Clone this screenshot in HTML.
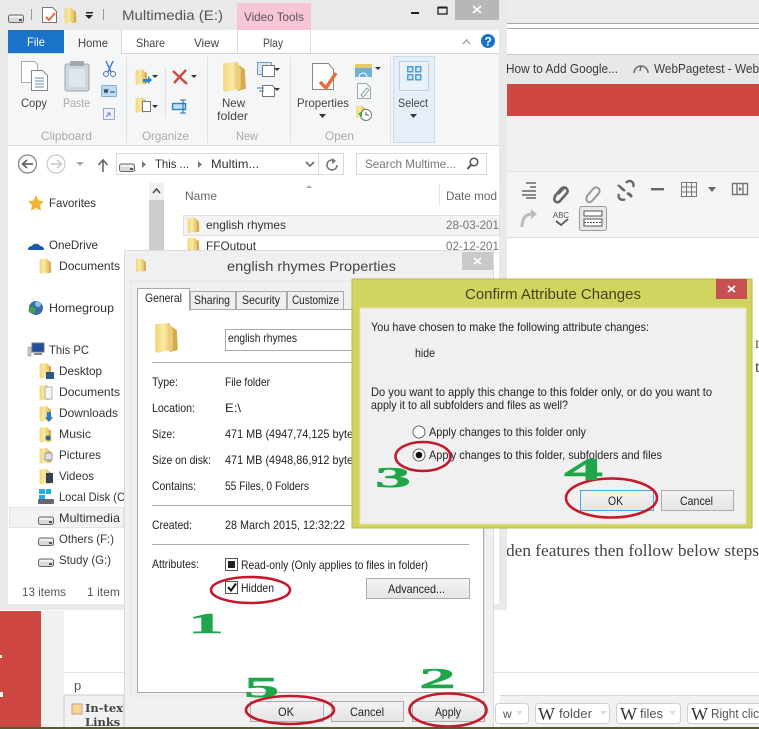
<!DOCTYPE html>
<html><head><meta charset="utf-8"><style>
html,body{margin:0;padding:0;background:#fff;width:759px;height:729px;overflow:hidden}
svg{display:block}
text{font-family:"Liberation Sans",sans-serif;font-size:12px;fill:#3a3a3a;white-space:pre}
.g{fill:#aaa}.d{fill:#222;font-size:12px}.s{font-family:"Liberation Serif",serif}
.n{font-family:"Liberation Serif",serif;font-weight:bold;fill:#1fa64a;font-size:30px;stroke:#1fa64a;stroke-width:.5}
.e{fill:none;stroke:#c4182c;stroke-width:2.6}
.ic{fill:none;stroke:#6b6b6b;stroke-width:1.5}
</style></head><body>
<svg width="759" height="729" viewBox="0 0 759 729" xmlns="http://www.w3.org/2000/svg">
<defs>
<linearGradient id="fy" x1="0" x2="1" y1="0" y2="0"><stop offset="0" stop-color="#efd77f"/><stop offset=".6" stop-color="#fbeaa4"/><stop offset="1" stop-color="#e2c163"/></linearGradient>
<linearGradient id="btn" x1="0" x2="0" y1="0" y2="1"><stop offset="0" stop-color="#f3f3f3"/><stop offset="1" stop-color="#e4e4e4"/></linearGradient>
<symbol id="fo" viewBox="0 0 24 30"><path d="M15 3 22 8 23 27 15 29Z" fill="#d6ab4b"/><path d="M1 2 15 1 16 27 3 30 1 28Z" fill="url(#fy)"/><path d="M15 1 18 8 18 27 15 28Z" fill="#ecd07f"/></symbol>
<symbol id="dr" viewBox="0 0 16 9"><rect x=".5" y="1" width="15" height="7.5" rx="2" fill="#d9d9d9" stroke="#666"/><rect x="1.5" y="1.8" width="13" height="2" fill="#f4f4f4"/><rect x="11" y="5" width="3" height="2" fill="#555"/></symbol>
</defs>

<!-- page background right -->
<rect width="759" height="729" fill="#fff"/>
<rect x="500" y="0" width="259" height="23" fill="#ececec"/>
<rect x="500" y="23" width="259" height="1" fill="#a8a8a8"/>
<rect x="500" y="28" width="259" height="1" fill="#a8a8a8"/>
<rect x="500" y="54" width="259" height="1" fill="#c9c9c9"/>
<rect x="500" y="55" width="259" height="29" fill="#e8e8e8"/>
<rect x="500" y="84" width="259" height="32" fill="#ce4743"/>
<rect x="500" y="116" width="259" height="55" fill="#f1f1f1"/>
<rect x="500" y="171" width="259" height="66" fill="#f5f5f5"/>
<rect x="500" y="171" width="259" height="1" fill="#e2e2e2"/>
<rect x="500" y="237" width="259" height="1" fill="#dedede"/>
<text x="506" y="73" textLength="112" lengthAdjust="spacingAndGlyphs" style="font-size:13px">How to Add Google...</text>
<path d="M634 73a7 7 0 0 1 14 0M641 66l-1 5" class="ic"/>
<text x="654" y="73" textLength="105" lengthAdjust="spacingAndGlyphs" style="font-size:13px">WebPagetest - Web</text>
<!-- toolbar icons -->
<path d="M526 183h10M530 187h6M522 191h14M522 195h14M526 198h10" stroke="#666" stroke-width="1.6" fill="none"/>
<path d="M555 196l6-7a3 3 0 0 1 6 4l-7 8a3 3 0 0 1-5-4zM558 194l6-6" fill="none" stroke="#666" stroke-width="2.6"/>
<path d="M587 196l6-7a3 3 0 0 1 6 4l-7 8a3 3 0 0 1-5-4z" fill="none" stroke="#999" stroke-width="2"/>
<path d="M618 185l6 5M632 197l-5-4M626 183a4 4 0 0 1 7 4M619 194a4 4 0 0 0 6 5M625 191l-4-3M628 193l4 3" fill="none" stroke="#666" stroke-width="2.4"/>
<rect x="651" y="188" width="13" height="2.4" fill="#666"/>
<path d="M681.500 182.500h15v14h-15zM681 187h16M681 192h16M686.500 182v15M691.500 182v15" fill="none" stroke="#777"/>
<path d="M708 187h8l-4 5z" fill="#666"/>
<path d="M732.500 183.500h15v11h-15zM737 183v12M743 183v12" fill="none" stroke="#777" stroke-width="1.4"/><path d="M739 187l3 2-3 2z" fill="#666"/>
<path d="M522 227c0-9 4-13 10-13" fill="none" stroke="#bbb" stroke-width="3"/><path d="M531 209l6 5-6 5z" fill="#bbb"/>
<text x="553" y="218" textLength="16" lengthAdjust="spacingAndGlyphs" style="font-size:8px;fill:#555">ABC</text>
<path d="M556 221l5 4 7-6" fill="none" stroke="#555" stroke-width="1.8"/>
<rect x="579.500" y="206.500" width="27" height="24" rx="2" fill="#e8e8e8" stroke="#9a9a9a"/>
<rect x="584" y="211" width="18" height="5" fill="#fff" stroke="#555"/><rect x="584" y="219" width="18" height="7" fill="#fff" stroke="#555"/>
<path d="M584 222.500h18" stroke="#555" stroke-dasharray="2 1"/>
<!-- article text -->
<text x="755" y="348" class="s" style="font-size:16px;fill:#8a5a30">n</text>
<text x="755" y="372" class="s" style="font-size:16px">t</text>
<text x="506" y="556" class="s" textLength="253" lengthAdjust="spacingAndGlyphs" style="font-size:17px;fill:#444">den features then follow below steps</text>
<rect x="64" y="672" width="695" height="1" fill="#e2e2e2"/>
<rect x="500" y="695" width="259" height="34" fill="#f1f1f1"/>
<rect x="500" y="695" width="259" height="1" fill="#d5d5d5"/>
<!-- wp buttons -->
<g fill="#fff" stroke="#d0d0d0"><rect x="495.500" y="703.500" width="33" height="20" rx="3"/><rect x="535.500" y="703.500" width="74" height="20" rx="3"/><rect x="616.500" y="703.500" width="64" height="20" rx="3"/><rect x="687.500" y="703.500" width="90" height="20" rx="3"/></g>
<text x="503" y="718" style="font-size:12px;fill:#555">w</text>
<text x="538" y="720" class="s" style="font-size:18px;fill:#333">W</text><text x="620" y="720" class="s" style="font-size:18px;fill:#333">W</text><text x="691" y="720" class="s" style="font-size:18px;fill:#333">W</text>
<text x="559" y="718" textLength="33" lengthAdjust="spacingAndGlyphs" style="font-size:12.500px;fill:#555">folder</text>
<text x="640" y="718" textLength="23" lengthAdjust="spacingAndGlyphs" style="font-size:12.500px;fill:#555">files</text>
<text x="711" y="718" textLength="48" lengthAdjust="spacingAndGlyphs" style="font-size:12.500px;fill:#555">Right clic</text>
<path d="M516 711h7l-3.500 4zM600 711h7l-3.500 4zM669 711h7l-3.500 4z" fill="#ddd"/>
<!-- left bottom -->
<rect x="0" y="611" width="41" height="118" fill="#ce4743"/>
<rect x="41" y="611" width="23" height="118" fill="#f1f1f1"/>
<rect x="0" y="655" width="2" height="3" fill="#fff"/><rect x="0" y="692" width="3" height="5" fill="#fff"/>
<text x="74" y="690" style="font-size:13px;fill:#555">p</text>
<rect x="64" y="695" width="60" height="34" fill="#f1f1f1" stroke="#ccc"/>
<rect x="72" y="704" width="10" height="10" fill="#f5d98a" stroke="#c99"/>
<text x="85" y="712" style="font-family:'DejaVu Serif',serif;font-size:11.500px;font-weight:bold;fill:#444">In-tex</text>
<text x="85" y="726" style="font-family:'DejaVu Serif',serif;font-size:11.500px;font-weight:bold;fill:#444">Links</text>

<!-- EXPLORER -->
<rect x="0" y="0" width="507" height="610" fill="#e9e9e9"/>
<rect x="8" y="30" width="491" height="574" fill="#fff"/>
<rect x="8" y="53" width="491" height="92" fill="#f5f6f7"/>
<rect x="8" y="145" width="491" height="1" fill="#dadbdc"/>
<rect x="8" y="53" width="491" height="1" fill="#d5d5d5"/>
<!-- title -->
<use href="#dr" x="8" y="14" width="16" height="9"/>
<rect x="31" y="9" width="1" height="11" fill="#999"/><rect x="103" y="9" width="1" height="11" fill="#999"/>
<path d="M42.500 7.500h10l4 4v11h-14z" fill="#fff" stroke="#777"/><path d="M46 17l3 3 6-7" fill="none" stroke="#e2684a" stroke-width="2"/>
<use href="#fo" x="64" y="7" width="13" height="17"/>
<rect x="86" y="12" width="7" height="1.500" fill="#222"/><path d="M85 15h8l-4 4z" fill="#222"/>
<text x="122" y="20" textLength="101" lengthAdjust="spacingAndGlyphs" style="font-size:14px;fill:#555">Multimedia (E:)</text>
<rect x="237" y="3" width="74" height="27" fill="#f8c5d8"/>
<text x="244" y="21" textLength="60" lengthAdjust="spacingAndGlyphs" style="font-size:12px;fill:#555">Video Tools</text>
<rect x="411" y="12" width="8" height="2" fill="#222"/>
<rect x="438" y="7.500" width="9" height="6.500" fill="none" stroke="#222" stroke-width="1.300"/><rect x="438" y="6.500" width="9" height="2" fill="#222"/>
<rect x="455" y="0" width="44" height="20" fill="#b7b7b7"/>
<path d="M473 6l8 7M481 6l-8 7" stroke="#fff" stroke-width="1.800"/>
<!-- tabs -->
<rect x="8" y="30" width="56" height="23" fill="#1a73c8"/>
<text x="27" y="46" textLength="18" lengthAdjust="spacingAndGlyphs" style="font-size:12px;fill:#fff">File</text>
<rect x="64" y="30" width="57" height="24" fill="#f5f6f7"/><path d="M121.500 30v24" stroke="#d5d5d5"/>
<path d="M237.500 30v23M310.500 30v23" stroke="#dcdcdc"/>
<text x="78" y="47" textLength="30" lengthAdjust="spacingAndGlyphs" style="fill:#444">Home</text>
<text x="136" y="47" textLength="29" lengthAdjust="spacingAndGlyphs" style="fill:#444">Share</text>
<text x="194" y="47" textLength="25" lengthAdjust="spacingAndGlyphs" style="fill:#444">View</text>
<text x="263" y="47" textLength="20" lengthAdjust="spacingAndGlyphs" style="fill:#444">Play</text>
<path d="M463 44l3.500-4 3.500 4" fill="none" stroke="#aaa" stroke-width="1.600"/>
<circle cx="488" cy="41" r="7" fill="#1a73c8"/><text x="484.500" y="45.500" style="font-size:12px;font-weight:bold;fill:#fff">?</text>
<!-- ribbon separators -->
<g fill="#e0e1e2"><rect x="126" y="57" width="1" height="86"/><rect x="207" y="57" width="1" height="86"/><rect x="290" y="57" width="1" height="86"/><rect x="390" y="57" width="1" height="86"/><rect x="165" y="68" width="1" height="50"/></g>
<!-- copy -->
<path d="M21.500 61.500h13l3 3v18h-16z" fill="#fff" stroke="#aaa"/><path d="M31.500 70.500h11l5 5v15h-16z" fill="#fff" stroke="#888"/>
<path d="M35 78h9M35 81h9M35 84h9M35 87h9" stroke="#5d8bb5"/>
<text x="21" y="107" textLength="26" lengthAdjust="spacingAndGlyphs" style="fill:#444">Copy</text>
<rect x="65" y="64" width="24" height="27" rx="2" fill="#cfd6de" stroke="#9ba4ad"/><rect x="70" y="61" width="14" height="5" fill="#a0a8b0"/><rect x="69" y="69" width="16" height="18" fill="#dfe6ee"/>
<text x="63" y="107" textLength="27" lengthAdjust="spacingAndGlyphs" class="g">Paste</text>
<path d="M106 61l5 11M113 61l-5 11" stroke="#3d7cb8" stroke-width="1.500"/><circle cx="106" cy="74" r="2.500" fill="none" stroke="#3d7cb8"/><circle cx="113" cy="74" r="2.500" fill="none" stroke="#3d7cb8"/>
<rect x="101.500" y="85.500" width="15" height="11" rx="1" fill="#bcdcf5" stroke="#7fb0d8"/><path d="M104 89l1 4 1-4 1 4 1-4M110 92h5" stroke="#345" fill="none"/>
<rect x="103.500" y="108.500" width="11" height="11" fill="#eef" stroke="#9ab"/><path d="M106 117l4-4M107 113h3v3" fill="none" stroke="#78a"/>
<text x="41" y="140" textLength="51" lengthAdjust="spacingAndGlyphs" class="g">Clipboard</text>
<text x="142" y="140" textLength="47" lengthAdjust="spacingAndGlyphs" class="g">Organize</text>
<text x="236" y="140" textLength="22" lengthAdjust="spacingAndGlyphs" class="g">New</text>
<text x="325" y="140" textLength="29" lengthAdjust="spacingAndGlyphs" class="g">Open</text>
<!-- organize -->
<use href="#fo" x="135" y="69" width="13" height="16"/><path d="M143 79h5v-3l4 4-4 4v-2h-5z" fill="#2a86c8"/>
<path d="M152 75h6l-3 3z" fill="#333"/>
<use href="#fo" x="135" y="97" width="13" height="16"/><rect x="142.500" y="101.500" width="8" height="10" fill="#fff" stroke="#777"/><path d="M152 105h6l-3 3z" fill="#333"/>
<path d="M173 71l14 13M186 70l-12 13" stroke="#d0483e" stroke-width="2.400"/><path d="M191 75h6l-3 3z" fill="#333"/>
<rect x="172.500" y="103.500" width="13" height="6" fill="#bde0f5" stroke="#2a86c8" stroke-width="1.400"/><path d="M183 100v13M180 100h6M180 113h6" stroke="#2a6a98"/>
<!-- new -->
<use href="#fo" x="222" y="61" width="25" height="31"/>
<text x="222" y="107" textLength="23" lengthAdjust="spacingAndGlyphs" style="fill:#444">New</text>
<text x="217" y="120" textLength="31" lengthAdjust="spacingAndGlyphs" style="fill:#444">folder</text>
<rect x="257.500" y="62.500" width="14" height="12" fill="#d5e6f5" stroke="#7a9cba"/><rect x="262.500" y="65.500" width="12" height="11" fill="#fff" stroke="#777"/><path d="M274 68h6l-3 3z" fill="#333"/>
<path d="M262.500 85.500h10l2 2v9h-12z" fill="#fff" stroke="#777"/><path d="M257 88h7M259 91h5" stroke="#3d7cb8"/><path d="M274 88h6l-3 3z" fill="#333"/>
<!-- open -->
<path d="M312.500 63.500h16l5 6v20h-21z" fill="#fff" stroke="#888"/><path d="M320 82l6 6 10-15" fill="none" stroke="#e06f3c" stroke-width="3.500"/>
<text x="297" y="107" textLength="52" lengthAdjust="spacingAndGlyphs" style="fill:#444">Properties</text>
<path d="M319 114h7l-3.500 4z" fill="#333"/>
<rect x="355" y="64" width="17" height="13" rx="1" fill="#e8c96a"/><rect x="355" y="68" width="17" height="9" fill="#6fb0d8"/><path d="M359 77a4 4 0 0 1 8 0" fill="none" stroke="#fff"/>
<path d="M375 67h6l-3 3z" fill="#333"/>
<path d="M357.500 83.500h9l4 4v11h-13z" fill="#f7f7f7" stroke="#9aa"/><path d="M361 95l6-7 2 2-6 7z" fill="none" stroke="#8aa"/>
<use href="#fo" x="355" y="105" width="12" height="13"/><circle cx="366" cy="115" r="5.500" fill="#fff" stroke="#777"/><path d="M366 112v3h3" stroke="#555" fill="none"/><path d="M358 114l4-3v6z" fill="#4a4"/>
<!-- select -->
<rect x="393.500" y="56.500" width="41" height="86" fill="#e6eff7" stroke="#c8dbea"/>
<rect x="399.500" y="61.500" width="29" height="29" fill="#eaf2f9" stroke="#bcd0e0"/>
<g fill="#4ea0dc"><rect x="407" y="66" width="6.500" height="6.500"/><rect x="415" y="66" width="6.500" height="6.500"/><rect x="407" y="74" width="6.500" height="6.500"/><rect x="415" y="74" width="6.500" height="6.500"/></g>
<g fill="#cfe6f8"><rect x="408.500" y="67.500" width="3.500" height="3.500"/><rect x="416.500" y="67.500" width="3.500" height="3.500"/><rect x="408.500" y="75.500" width="3.500" height="3.500"/><rect x="416.500" y="75.500" width="3.500" height="3.500"/></g>
<text x="398" y="107" textLength="30" lengthAdjust="spacingAndGlyphs" style="fill:#444">Select</text>
<path d="M410 114h7l-3.500 4z" fill="#333"/>
<!-- address -->
<circle cx="27.500" cy="164" r="9" fill="#fff" stroke="#888" stroke-width="1.300"/><path d="M33 164h-10M27 160l-4.500 4 4.500 4" fill="none" stroke="#666" stroke-width="1.800"/>
<circle cx="56" cy="164" r="9" fill="#fff" stroke="#ccc" stroke-width="1.300"/><path d="M51 164h10M57 160l4.500 4-4.500 4" fill="none" stroke="#ccc" stroke-width="1.800"/>
<path d="M76 162h8l-4 4z" fill="#aaa"/>
<path d="M103 172v-12M98.500 165l4.500-5 4.500 5" fill="none" stroke="#666" stroke-width="1.600"/>
<rect x="116.500" y="153.500" width="227" height="21" fill="#fff" stroke="#d9d9d9"/>
<use href="#dr" x="119" y="163" width="16" height="9"/>
<path d="M142 161l4 3.500-4 3.500z" fill="#777"/><path d="M198 161l4 3.500-4 3.500z" fill="#777"/>
<text x="155" y="168" textLength="34" lengthAdjust="spacingAndGlyphs" style="fill:#333">This ...</text>
<text x="211" y="168" textLength="48" lengthAdjust="spacingAndGlyphs" style="fill:#333">Multim...</text>
<path d="M306 162l4 4 4-4" fill="none" stroke="#666" stroke-width="1.600"/>
<rect x="318" y="154" width="1" height="20" fill="#d9d9d9"/>
<path d="M335 161a5 5 0 1 0 2 4" fill="none" stroke="#777" stroke-width="1.600"/><path d="M332 158l4 3-4 3z" fill="#777"/>
<rect x="356.500" y="153.500" width="130" height="21" fill="#fff" stroke="#d9d9d9"/>
<text x="365" y="168" textLength="91" lengthAdjust="spacingAndGlyphs" style="fill:#777">Search Multime...</text>
<circle cx="474" cy="162" r="3.800" fill="none" stroke="#555" stroke-width="1.500"/><path d="M471 165l-3.500 4" stroke="#555" stroke-width="2"/>
<!-- nav scroll -->
<rect x="149" y="183" width="15" height="67" fill="#f0f0f0"/>
<rect x="149" y="200" width="15" height="50" fill="#cdcdcd"/>
<path d="M153 193l3.500-4 3.500 4" fill="none" stroke="#444" stroke-width="1.500"/>
<!-- column header -->
<text x="185" y="200" textLength="32" lengthAdjust="spacingAndGlyphs" style="fill:#666">Name</text>
<path d="M306 188l3-3 3 3z" fill="#aaa"/>
<rect x="439" y="184" width="1" height="22" fill="#e5e5e5"/>
<text x="446" y="200" textLength="51" lengthAdjust="spacingAndGlyphs" style="fill:#666">Date mod</text>
<rect x="183.500" y="215.500" width="316" height="20" fill="#f3f3f3" stroke="#e0e0e0"/>
<use href="#fo" x="187" y="217" width="13" height="16"/><use href="#fo" x="187" y="237" width="13" height="16"/>
<text x="206" y="229" textLength="80" lengthAdjust="spacingAndGlyphs" style="fill:#333">english rhymes</text>
<text x="206" y="250" textLength="50" lengthAdjust="spacingAndGlyphs" style="fill:#333">FFOutput</text>
<text x="446" y="229" textLength="53" lengthAdjust="spacingAndGlyphs" style="fill:#777">28-03-201</text>
<text x="446" y="250" textLength="53" lengthAdjust="spacingAndGlyphs" style="fill:#777">02-12-201</text>
<!-- nav -->
<path d="M36 195l2.500 5.500 5.500.8-4 4 1 5.500-5-2.800-5 2.800 1-5.500-4-4 5.500-.8z" fill="#f5b335"/>
<text x="49" y="207" textLength="47" lengthAdjust="spacingAndGlyphs" style="fill:#333">Favorites</text>
<path d="M28 250c0-3 2-4 4-4 1-3 7-3 8 0 2 0 4 1 4 4z" fill="#1a5aa8"/>
<text x="49" y="249" textLength="49" lengthAdjust="spacingAndGlyphs" style="fill:#333">OneDrive</text>
<text x="59" y="270" textLength="61" lengthAdjust="spacingAndGlyphs" style="fill:#333">Documents</text>
<circle cx="36" cy="308" r="7" fill="#3a6ca8"/><circle cx="32" cy="310" r="3.500" fill="#46a04a"/><circle cx="38" cy="304" r="3" fill="#8cc0e8"/>
<text x="49" y="312" textLength="65" lengthAdjust="spacingAndGlyphs" style="fill:#333">Homegroup</text>
<rect x="32" y="343" width="12" height="9" fill="#1f4fa0" stroke="#777"/><rect x="28" y="347" width="3" height="9" fill="#ccc" stroke="#888" stroke-width=".5"/><rect x="34" y="353" width="8" height="2" fill="#888"/>
<text x="49" y="354" textLength="40" lengthAdjust="spacingAndGlyphs" style="fill:#333">This PC</text>
<use href="#fo" x="39" y="258" width="13" height="16"/>
<use href="#fo" x="39" y="362" width="13" height="17"/><rect x="46" y="372" width="8" height="7" fill="#2a5a80"/>
<use href="#fo" x="39" y="384" width="13" height="17"/><rect x="45" y="387" width="7" height="12" fill="#f5f5f5" stroke="#999" stroke-width=".7"/>
<use href="#fo" x="39" y="405" width="13" height="17"/><path d="M47 412h4v5h2l-4 5-4-5h2z" fill="#2a7ac8"/>
<use href="#fo" x="39" y="426" width="13" height="17"/><circle cx="48" cy="438" r="2.500" fill="#2a6a98"/>
<use href="#fo" x="39" y="447" width="13" height="17"/><rect x="45" y="453" width="7" height="7" fill="#dde" stroke="#778" stroke-width=".7"/>
<use href="#fo" x="39" y="468" width="13" height="17"/><rect x="46" y="473" width="7" height="10" fill="#345"/>
<text x="59" y="375" textLength="43" lengthAdjust="spacingAndGlyphs" style="fill:#333">Desktop</text>
<text x="59" y="396" textLength="61" lengthAdjust="spacingAndGlyphs" style="fill:#333">Documents</text>
<text x="59" y="417" textLength="59" lengthAdjust="spacingAndGlyphs" style="fill:#333">Downloads</text>
<text x="59" y="438" textLength="32" lengthAdjust="spacingAndGlyphs" style="fill:#333">Music</text>
<text x="59" y="459" textLength="42" lengthAdjust="spacingAndGlyphs" style="fill:#333">Pictures</text>
<text x="59" y="480" textLength="35" lengthAdjust="spacingAndGlyphs" style="fill:#333">Videos</text>
<rect x="39" y="489" width="6" height="5" fill="#22aee0"/><rect x="46" y="489" width="5" height="5" fill="#22aee0"/><rect x="39" y="495" width="6" height="4" fill="#22aee0"/>
<rect x="38" y="499" width="16" height="5" rx="1" fill="#667"/>
<text x="59" y="501" textLength="66" lengthAdjust="spacingAndGlyphs" style="fill:#333">Local Disk (C</text>
<rect x="9.500" y="507.500" width="114" height="20" fill="#f3f3f3" stroke="#e3e3e3"/>
<use href="#dr" x="38" y="516" width="16" height="9"/><use href="#dr" x="38" y="537" width="16" height="9"/><use href="#dr" x="38" y="558" width="16" height="9"/>
<text x="59" y="522" textLength="61" lengthAdjust="spacingAndGlyphs" style="fill:#333">Multimedia</text>
<text x="59" y="543" textLength="55" lengthAdjust="spacingAndGlyphs" style="fill:#333">Others (F:)</text>
<text x="59" y="564" textLength="52" lengthAdjust="spacingAndGlyphs" style="fill:#333">Study (G:)</text>
<text x="22" y="596" textLength="44" lengthAdjust="spacingAndGlyphs" style="fill:#555">13 items</text>
<text x="87" y="596" textLength="33" lengthAdjust="spacingAndGlyphs" style="fill:#555">1 item</text>

<!-- PROPERTIES DIALOG -->
<rect x="124" y="250" width="370" height="479" fill="#f0f0f0"/>
<path d="M124.500 729V250.500h369V729" fill="none" stroke="#dcdcdc"/>
<rect x="130.500" y="281" width="354" height="415" fill="none" stroke="#e6e6e6"/>
<rect x="462" y="252" width="31" height="18" fill="#c9c9c9"/><path d="M474 258l7 6M481 258l-7 6" stroke="#fff" stroke-width="1.600"/>
<use href="#fo" x="135" y="258" width="12" height="14"/>
<text x="227" y="271" textLength="169" lengthAdjust="spacingAndGlyphs" style="font-size:14px;fill:#444">english rhymes Properties</text>
<rect x="137.500" y="309.500" width="346" height="383" fill="#fff" stroke="#a9a9a9"/>
<rect x="190.500" y="291.500" width="45" height="18" fill="#efefef" stroke="#aaa"/>
<rect x="236.500" y="291.500" width="50" height="18" fill="#efefef" stroke="#aaa"/>
<rect x="287.500" y="291.500" width="56" height="18" fill="#efefef" stroke="#aaa"/>
<rect x="137.500" y="288.500" width="52" height="22" fill="#fff" stroke="#aaa"/><rect x="138" y="308" width="51" height="3" fill="#fff"/>
<text x="145" y="302" textLength="37" lengthAdjust="spacingAndGlyphs" class="d">General</text>
<text x="194" y="304" textLength="36" lengthAdjust="spacingAndGlyphs" class="d">Sharing</text>
<text x="242" y="304" textLength="38" lengthAdjust="spacingAndGlyphs" class="d">Security</text>
<text x="292" y="304" textLength="47" lengthAdjust="spacingAndGlyphs" class="d">Customize</text>
<use href="#fo" x="154" y="322" width="25" height="31"/>
<rect x="225.500" y="329.500" width="130" height="21" fill="#fff" stroke="#aaa"/>
<text x="228" y="342" textLength="69" lengthAdjust="spacingAndGlyphs" class="d">english rhymes</text>
<rect x="152" y="362" width="317" height="1" fill="#aaa"/>
<text x="152" y="386" textLength="26" lengthAdjust="spacingAndGlyphs" class="d">Type:</text><text x="225" y="386" textLength="45" lengthAdjust="spacingAndGlyphs" class="d">File folder</text>
<text x="152" y="412" textLength="43" lengthAdjust="spacingAndGlyphs" class="d">Location:</text><text x="225" y="412" textLength="16" lengthAdjust="spacingAndGlyphs" class="d">E:\</text>
<text x="152" y="438" textLength="23" lengthAdjust="spacingAndGlyphs" class="d">Size:</text><text x="225" y="438" textLength="128" lengthAdjust="spacingAndGlyphs" class="d">471 MB (4947,74,125 byte</text>
<text x="152" y="464" textLength="59" lengthAdjust="spacingAndGlyphs" class="d">Size on disk:</text><text x="225" y="464" textLength="128" lengthAdjust="spacingAndGlyphs" class="d">471 MB (4948,86,912 byte</text>
<text x="152" y="490" textLength="44" lengthAdjust="spacingAndGlyphs" class="d">Contains:</text><text x="225" y="490" textLength="84" lengthAdjust="spacingAndGlyphs" class="d">55 Files, 0 Folders</text>
<rect x="152" y="505" width="317" height="1" fill="#aaa"/>
<text x="152" y="529" textLength="40" lengthAdjust="spacingAndGlyphs" class="d">Created:</text><text x="225" y="529" textLength="120" lengthAdjust="spacingAndGlyphs" class="d">28 March 2015, 12:32:22</text>
<rect x="152" y="544" width="317" height="1" fill="#aaa"/>
<text x="152" y="568" textLength="47" lengthAdjust="spacingAndGlyphs" class="d">Attributes:</text>
<rect x="225.500" y="558.500" width="12" height="12" fill="#fff" stroke="#555"/><rect x="228" y="561" width="7" height="7" fill="#222"/>
<text x="241" y="569" textLength="187" lengthAdjust="spacingAndGlyphs" class="d">Read-only (Only applies to files in folder)</text>
<rect x="225.500" y="581.500" width="12" height="12" fill="#fff" stroke="#555"/><path d="M228 587l3 3.500 5-7" fill="none" stroke="#111" stroke-width="2"/>
<text x="241" y="592" textLength="33" lengthAdjust="spacingAndGlyphs" class="d">Hidden</text>
<rect x="366.500" y="578.500" width="103" height="20" fill="url(#btn)" stroke="#adadad"/>
<text x="388" y="593" textLength="57" lengthAdjust="spacingAndGlyphs" class="d">Advanced...</text>
<rect x="250.500" y="701.500" width="73" height="20" fill="url(#btn)" stroke="#adadad"/>
<rect x="331.500" y="701.500" width="72" height="20" fill="url(#btn)" stroke="#adadad"/>
<rect x="412.500" y="701.500" width="72" height="20" fill="url(#btn)" stroke="#adadad"/>
<text x="278" y="716" textLength="16" lengthAdjust="spacingAndGlyphs" class="d">OK</text>
<text x="350" y="716" textLength="34" lengthAdjust="spacingAndGlyphs" class="d">Cancel</text>
<text x="435" y="716" textLength="26" lengthAdjust="spacingAndGlyphs" class="d">Apply</text>

<!-- CONFIRM DIALOG -->
<rect x="352" y="279" width="400" height="249" fill="#d2d460" stroke="#b8ba52"/>
<rect x="360" y="308" width="386" height="216" fill="#f0f0f0" stroke="#e5e6b0"/>
<rect x="716" y="279" width="31" height="20" fill="#c75050"/><path d="M728 286l7 6M735 286l-7 6" stroke="#fff" stroke-width="1.800"/>
<text x="465" y="299" textLength="176" lengthAdjust="spacingAndGlyphs" style="font-size:15px;fill:#44451a">Confirm Attribute Changes</text>
<text x="371" y="331" textLength="278" lengthAdjust="spacingAndGlyphs" class="d">You have chosen to make the following attribute changes:</text>
<text x="415" y="357" textLength="20" lengthAdjust="spacingAndGlyphs" class="d">hide</text>
<text x="371" y="396" textLength="341" lengthAdjust="spacingAndGlyphs" class="d">Do you want to apply this change to this folder only, or do you want to</text>
<text x="371" y="409" textLength="197" lengthAdjust="spacingAndGlyphs" class="d">apply it to all subfolders and files as well?</text>
<circle cx="419" cy="432" r="6" fill="#fff" stroke="#666"/>
<text x="429" y="436" textLength="157" lengthAdjust="spacingAndGlyphs" class="d">Apply changes to this folder only</text>
<circle cx="419" cy="455" r="6" fill="#fff" stroke="#666"/><circle cx="419" cy="455" r="3.300" fill="#111"/>
<text x="429" y="459" textLength="233" lengthAdjust="spacingAndGlyphs" class="d">Apply changes to this folder, subfolders and files</text>
<rect x="580.500" y="490.500" width="73" height="20" fill="url(#btn)" stroke="#4aa3dc"/>
<rect x="661.500" y="490.500" width="72" height="20" fill="url(#btn)" stroke="#adadad"/>
<text x="608" y="505" textLength="15" lengthAdjust="spacingAndGlyphs" class="d">OK</text>
<text x="680" y="505" textLength="33" lengthAdjust="spacingAndGlyphs" class="d">Cancel</text>

<!-- annotations -->
<ellipse cx="250.500" cy="590" rx="39.500" ry="13" class="e"/>
<ellipse cx="290" cy="710" rx="44" ry="14" class="e"/>
<ellipse cx="448" cy="710" rx="38.500" ry="16.500" class="e"/>
<ellipse cx="423" cy="456.500" rx="27.500" ry="14.500" class="e"/>
<ellipse cx="611.500" cy="498" rx="45.500" ry="19.500" class="e"/>
<text class="n" transform="translate(188 633) scale(2.400 .95)" x="0" y="0">1</text>
<text class="n" transform="translate(419 688) scale(2.450 .95)" x="0" y="0">2</text>
<text class="n" transform="translate(244 697) scale(2.350 .95)" x="0" y="0">5</text>
<text class="n" transform="translate(375 487) scale(2.400 .95)" x="0" y="0">3</text>
<text class="n" transform="translate(564 480) scale(2.600 1.050)" x="0" y="0">4</text>
<rect x="0" y="727" width="759" height="2" fill="#5a5a30"/>
</svg>
</body></html>
